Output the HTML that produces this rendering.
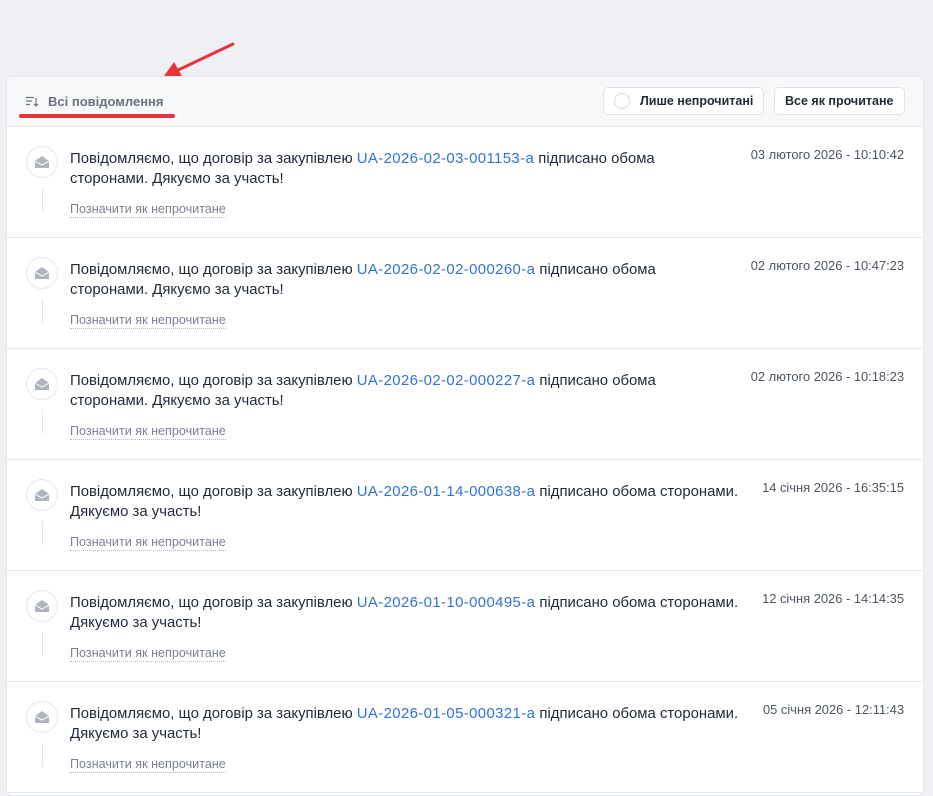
<!DOCTYPE html>
<html><head><meta charset="utf-8"><style>
*{box-sizing:border-box;margin:0;padding:0}
body{width:933px;height:764px;overflow:hidden;background:#eef0f4;font-family:"Liberation Sans",sans-serif;position:relative}
.card{position:absolute;left:6px;top:76px;width:918px;height:720px;background:#fff;border:1px solid #e3e6ec;border-radius:6px;overflow:hidden}
.hdr{height:50px;background:#f7f8fa;border-bottom:1px solid #e3e6ec;position:relative}
.tab{position:absolute;left:19px;top:17px;font-size:13px;font-weight:bold;color:#6b7280;display:flex;align-items:center;gap:9px}
.uline{position:absolute;left:12px;top:37px;width:156px;height:4px;background:#e5353b;border-radius:2px}
.btn{position:absolute;top:10px;height:28px;border:1px solid #dfe2e8;border-radius:5px;background:#fff;font-size:12.5px;font-weight:bold;color:#1f2937;display:flex;align-items:center;padding:0 10px;white-space:nowrap}
.circ{width:16px;height:16px;border:1px solid #d5d8de;border-radius:50%;margin-right:10px;flex:none}
.row{height:111px;border-bottom:1px solid #e3e6ec;position:relative}
.ic{position:absolute;left:19px;top:19px;width:32px;height:32px;border:1px solid #e6e8ec;border-radius:50%;display:flex;align-items:center;justify-content:center}
.vl{position:absolute;left:35px;top:61px;width:1px;height:24px;background:#e3e6ec}
.txt{position:absolute;left:63px;top:22px;font-size:14.9px;line-height:20px;color:#1f2937;white-space:nowrap}
.txt a{color:#2f72d6;text-decoration:none;letter-spacing:0.4px}
.mk{position:absolute;left:63px;top:75px;font-size:12.6px;color:#7b8190;border-bottom:1px dotted #b8bcc6;line-height:15px}
.dt{position:absolute;right:19px;top:20px;font-size:12.9px;color:#4b5563;line-height:16px}
</style></head><body>
<svg style="position:absolute;left:160px;top:40px" width="80" height="40"><line x1="73" y1="4" x2="14" y2="32" stroke="#e5353b" stroke-width="3" stroke-linecap="round"/><polygon points="4,36 14,22 22,36" fill="#e5353b"/></svg>
<div class="card">
<div class="hdr">
<div class="tab"><svg width="13" height="11" viewBox="0 0 13 11"><path d="M0 1.5h8M0 5h6M0 8.5h4M10 2v8M8 8l2 2 2-2" stroke="#6b7280" stroke-width="1.2" fill="none"/></svg>Всі повідомлення</div>
<div class="uline"></div>
<div class="btn" style="left:596px;width:161px"><span class="circ"></span>Лише непрочитані</div>
<div class="btn" style="left:767px;width:131px">Все як прочитане</div>
</div>
<div class="row"><div class="ic"><svg width="14" height="12" viewBox="0 0 14 12"><path d="M0 5L7 0l7 5v7H0z" fill="#aeb3bd"/><path d="M0 5l7 4 7-4" stroke="#fff" stroke-width="1" fill="none"/></svg></div><div class="vl"></div>
<div class="txt">Повідомляємо, що договір за закупівлею <a>UA-2026-02-03-001153-a</a> підписано обома<br>сторонами. Дякуємо за участь!</div><div class="mk">Позначити як непрочитане</div><div class="dt">03 лютого 2026 - 10:10:42</div></div>
<div class="row"><div class="ic"><svg width="14" height="12" viewBox="0 0 14 12"><path d="M0 5L7 0l7 5v7H0z" fill="#aeb3bd"/><path d="M0 5l7 4 7-4" stroke="#fff" stroke-width="1" fill="none"/></svg></div><div class="vl"></div>
<div class="txt">Повідомляємо, що договір за закупівлею <a>UA-2026-02-02-000260-a</a> підписано обома<br>сторонами. Дякуємо за участь!</div><div class="mk">Позначити як непрочитане</div><div class="dt">02 лютого 2026 - 10:47:23</div></div>
<div class="row"><div class="ic"><svg width="14" height="12" viewBox="0 0 14 12"><path d="M0 5L7 0l7 5v7H0z" fill="#aeb3bd"/><path d="M0 5l7 4 7-4" stroke="#fff" stroke-width="1" fill="none"/></svg></div><div class="vl"></div>
<div class="txt">Повідомляємо, що договір за закупівлею <a>UA-2026-02-02-000227-a</a> підписано обома<br>сторонами. Дякуємо за участь!</div><div class="mk">Позначити як непрочитане</div><div class="dt">02 лютого 2026 - 10:18:23</div></div>
<div class="row"><div class="ic"><svg width="14" height="12" viewBox="0 0 14 12"><path d="M0 5L7 0l7 5v7H0z" fill="#aeb3bd"/><path d="M0 5l7 4 7-4" stroke="#fff" stroke-width="1" fill="none"/></svg></div><div class="vl"></div>
<div class="txt">Повідомляємо, що договір за закупівлею <a>UA-2026-01-14-000638-a</a> підписано обома сторонами.<br>Дякуємо за участь!</div><div class="mk">Позначити як непрочитане</div><div class="dt">14 січня 2026 - 16:35:15</div></div>
<div class="row"><div class="ic"><svg width="14" height="12" viewBox="0 0 14 12"><path d="M0 5L7 0l7 5v7H0z" fill="#aeb3bd"/><path d="M0 5l7 4 7-4" stroke="#fff" stroke-width="1" fill="none"/></svg></div><div class="vl"></div>
<div class="txt">Повідомляємо, що договір за закупівлею <a>UA-2026-01-10-000495-a</a> підписано обома сторонами.<br>Дякуємо за участь!</div><div class="mk">Позначити як непрочитане</div><div class="dt">12 січня 2026 - 14:14:35</div></div>
<div class="row"><div class="ic"><svg width="14" height="12" viewBox="0 0 14 12"><path d="M0 5L7 0l7 5v7H0z" fill="#aeb3bd"/><path d="M0 5l7 4 7-4" stroke="#fff" stroke-width="1" fill="none"/></svg></div><div class="vl"></div>
<div class="txt">Повідомляємо, що договір за закупівлею <a>UA-2026-01-05-000321-a</a> підписано обома сторонами.<br>Дякуємо за участь!</div><div class="mk">Позначити як непрочитане</div><div class="dt">05 січня 2026 - 12:11:43</div></div>
</div>
</body></html>
